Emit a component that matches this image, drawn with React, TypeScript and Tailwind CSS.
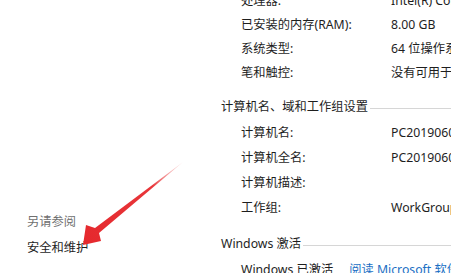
const rows1 = [
  ['处理器:', 'Intel(R) Core(TM) i5-8250U CPU'],
  ['已安装的内存(RAM):', '8.00 GB'],
  ['系统类型:', '64 位操作系统，基于 x64 的处理器'],
  ['笔和触控:', '没有可用于此显示器的笔或触控输入'],
];

const rows2 = [
  ['计算机名:', 'PC201906011234'],
  ['计算机全名:', 'PC201906011234'],
  ['计算机描述:', ''],
  ['工作组:', 'WorkGroup'],
];

function Row({ label, value }: { label: string; value: string }) {
  return (
    <div className="flex items-center h-[25px] pl-[22px] whitespace-nowrap">
      <span className="w-[150px] shrink-0">{label}</span>
      <span>{value}</span>
    </div>
  );
}

function Header({ title }: { title: string }) {
  return (
    <div className="flex items-center h-6 pl-[2px] whitespace-nowrap">
      <span>{title}</span>
      <div className="flex-1 h-px bg-[#d6d6d6] mt-[2px] ml-[2px]" />
    </div>
  );
}

export default function App() {
  return (
    <div
      className="relative w-[451px] h-[273px] overflow-hidden bg-white text-[#1e1e1e] text-[12.25px] flex"
      style={{ fontFamily: '"Noto Sans", "Noto Sans CJK SC", sans-serif' }}
    >
      <div className="w-[219px] shrink-0 pl-[27px] pt-[210px] flex flex-col gap-[2px]">
        <div className="h-6 flex items-center text-[#707070]">另请参阅</div>
        <div className="h-6 flex items-center">安全和维护</div>
      </div>

      <div className="flex-1 min-w-0 overflow-hidden">
        <div className="mt-[-11px]">
          {rows1.map(([l, v]) => (
            <div key={l} className="flex items-center h-6 pl-[22px] whitespace-nowrap">
              <span className="w-[150px] shrink-0">{l}</span>
              <span>{v}</span>
            </div>
          ))}
        </div>
        <div className="mt-[10px]">
          <Header title="计算机名、域和工作组设置" />
        </div>
        <div className="mt-[1.5px]">
          {rows2.map(([l, v]) => (
            <Row key={l} label={l} value={v} />
          ))}
        </div>
        <div className="mt-[11.5px]">
          <Header title="Windows 激活" />
        </div>
        <div className="flex items-center h-[25px] mt-[1.5px] pl-[22px] whitespace-nowrap">
          <span>Windows 已激活</span>
          <span className="ml-[16px] text-[#1a6fc4]">阅读 Microsoft 软件许可条款</span>
        </div>
      </div>

      {/* red annotation arrow */}
      <svg className="absolute left-0 top-0 pointer-events-none" width="451" height="273" viewBox="0 0 451 273">
        <defs>
          <linearGradient id="arrowFade" x1="183" y1="162" x2="83" y2="245" gradientUnits="userSpaceOnUse">
            <stop offset="0" stopColor="#f4a0a0" stopOpacity="0.3" />
            <stop offset="0.3" stopColor="#e8363a" />
            <stop offset="1" stopColor="#e5282d" />
          </linearGradient>
        </defs>
        <polygon
          points="183,162 95,228 86,225 83,245 101,241 99,233"
          fill="url(#arrowFade)"
        />
      </svg>
    </div>
  );
}
